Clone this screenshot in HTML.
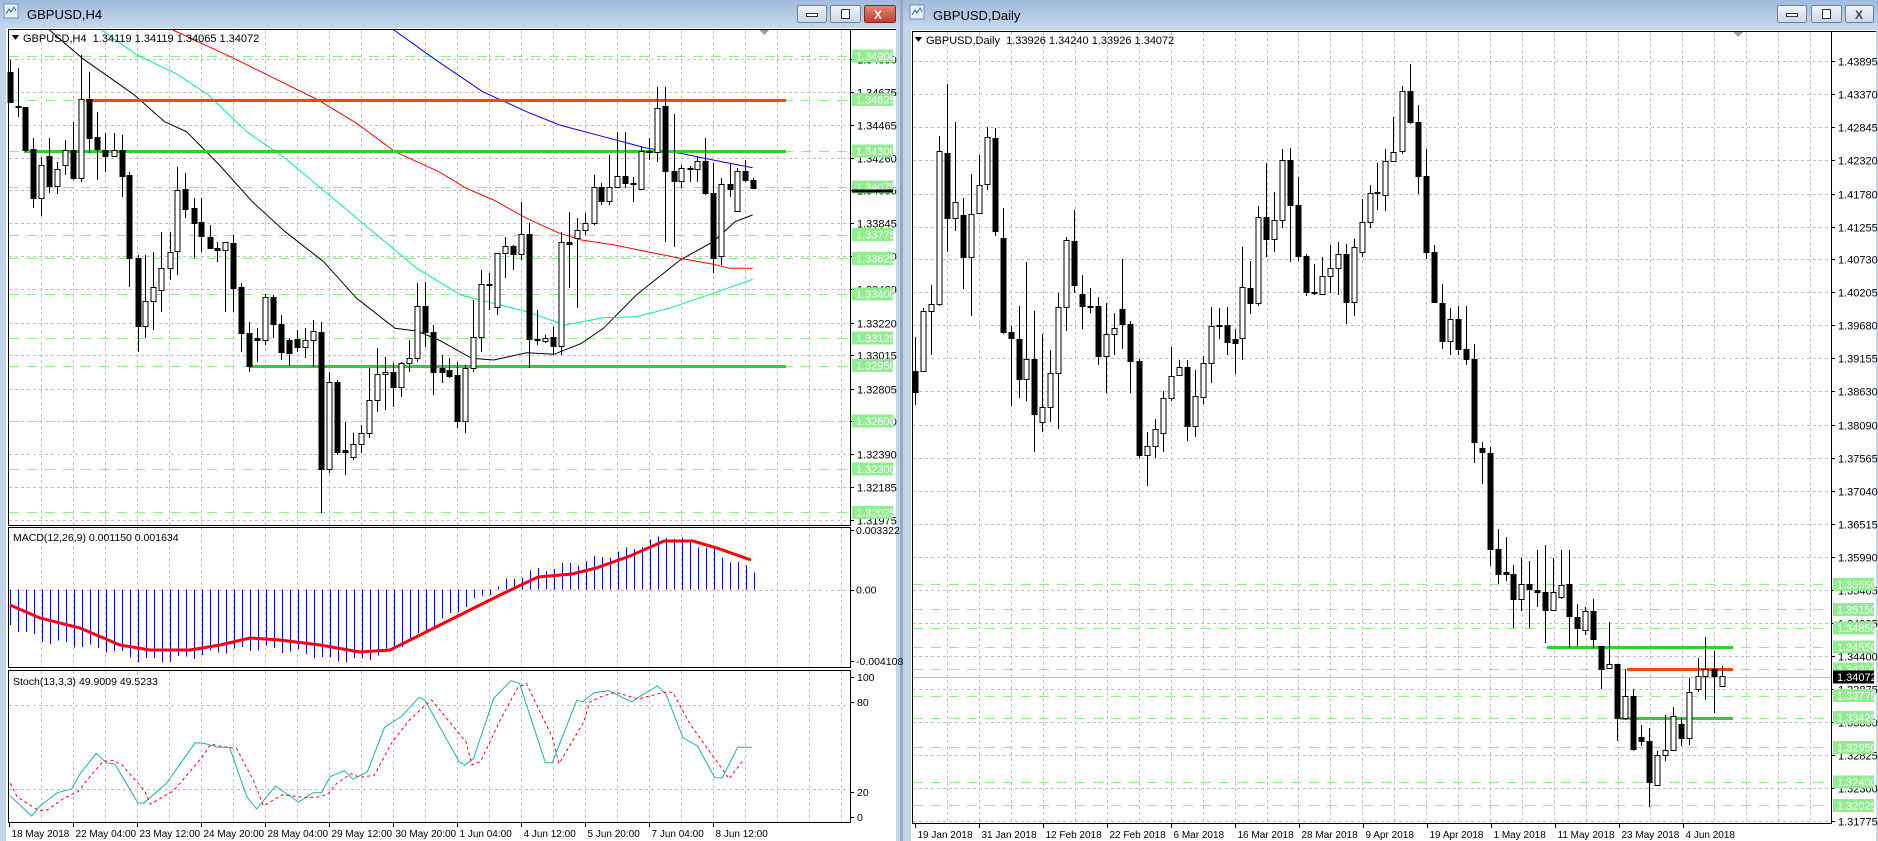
<!DOCTYPE html>
<html><head><meta charset="utf-8"><style>
html,body{margin:0;padding:0;width:1878px;height:841px;overflow:hidden;background:#b8cce4;}
svg text{font-family:"Liberation Sans",sans-serif;font-size:11px;}
svg text.d{font-size:10px;}
</style></head><body>
<svg id="s" width="1878" height="841" viewBox="0 0 1878 841" xmlns="http://www.w3.org/2000/svg" shape-rendering="crispEdges">
<defs>
<linearGradient id="tb" x1="0" y1="0" x2="0" y2="1"><stop offset="0" stop-color="#9fbadb"/><stop offset="1" stop-color="#c3d6ec"/></linearGradient>
<linearGradient id="bt" x1="0" y1="0" x2="0" y2="1"><stop offset="0" stop-color="#f4f7fb"/><stop offset="1" stop-color="#c9d6e6"/></linearGradient>
<linearGradient id="bx" x1="0" y1="0" x2="0" y2="1"><stop offset="0" stop-color="#e08a7a"/><stop offset="1" stop-color="#c23a28"/></linearGradient>
</defs>
<rect x="0" y="0" width="900" height="841" fill="#c3d6ec"/>
<rect x="0" y="0" width="900" height="26" fill="url(#tb)"/>
<rect x="4" y="4" width="14" height="14" fill="#e8f0fa" stroke="#6f8fb8"/>
<path d="M6 14 L9 9 L11 12 L14 7 L16 11" stroke="#3060b0" fill="none"/>
<text x="27" y="19" style="font-size:13px" fill="#000">GBPUSD,H4</text>
<rect x="797.5" y="5.5" width="29" height="17" rx="2" fill="url(#bt)" stroke="#6d7f99"/>
<rect x="806.5" y="13.5" width="11" height="3" fill="#fff" stroke="#333"/>
<rect x="830.5" y="5.5" width="30" height="17" rx="2" fill="url(#bt)" stroke="#6d7f99"/>
<rect x="841.5" y="9.5" width="8" height="9" fill="#fff" stroke="#333"/>
<rect x="864.5" y="5.5" width="31" height="17" rx="2" fill="url(#bx)" stroke="#7a2a20"/>
<text x="874" y="19" style="font-size:12px;font-weight:bold" fill="#fff">X</text>
<rect x="6" y="28" width="890" height="813" fill="#fff"/>
<rect x="900" y="0" width="3" height="841" fill="#9aa9bd"/>
<rect x="903" y="0" width="975" height="841" fill="#c3d6ec"/>
<rect x="903" y="0" width="975" height="27" fill="url(#tb)"/>
<rect x="910" y="5" width="14" height="14" fill="#e8f0fa" stroke="#6f8fb8"/>
<path d="M912 15 L915 10 L917 13 L920 8 L922 12" stroke="#3060b0" fill="none"/>
<text x="933" y="20" style="font-size:13px" fill="#000">GBPUSD,Daily</text>
<rect x="1777.5" y="5.5" width="29" height="17" rx="2" fill="url(#bt)" stroke="#6d7f99"/>
<rect x="1786.5" y="13.5" width="11" height="3" fill="#fff" stroke="#333"/>
<rect x="1811.5" y="5.5" width="30" height="17" rx="2" fill="url(#bt)" stroke="#6d7f99"/>
<rect x="1822.5" y="9.5" width="8" height="9" fill="#fff" stroke="#333"/>
<rect x="1845.5" y="5.5" width="28" height="17" rx="2" fill="url(#bt)" stroke="#6d7f99"/>
<text x="1855" y="19" style="font-size:12px;font-weight:bold" fill="#444">X</text>
<rect x="911" y="30" width="965" height="811" fill="#fff"/>
<g id="g"></g>
</svg>
<script>
(function(){
var s='';
function ln(x1,y1,x2,y2,c,w,d){s+='<line x1="'+x1+'" y1="'+y1+'" x2="'+x2+'" y2="'+y2+'" stroke="'+c+'" stroke-width="'+(w||1)+'"'+(d?' stroke-dasharray="'+d+'"':'')+'/>';}
function tx(x,y,t,c,extra){s+='<text x="'+x+'" y="'+y+'" fill="'+(c||'#000')+'"'+(extra||'')+'>'+t+'</text>';}
function pl(pts,c,w,d){var p=pts.map(function(a){return a[0].toFixed(1)+','+a[1].toFixed(1)}).join(' ');s+='<polyline points="'+p+'" fill="none" stroke="'+c+'" stroke-width="'+w+'"'+(d?' stroke-dasharray="'+d+'"':'')+' shape-rendering="auto"/>';}
function r(v){return Math.round(v)+0.5;}
var G='#c0c0c0',GR='#90ee90';
function yL(p){return 125+(1.34465-p)*15879;}
for(var k=1;k<=26;k++){var x=r(9.3+32*k);ln(x,30,x,525,G,1,'3,3');ln(x,528,x,667,G,1,'3,3');ln(x,671,x,822,G,1,'3,3');}
var lg=[1.34880,1.34675,1.34465,1.34260,1.34055,1.33845,1.33640,1.33430,1.33220,1.33015,1.32805,1.32600,1.32390,1.32185,1.31975];
lg.forEach(function(p){var y=r(yL(p));ln(9,y,850,y,G,1,'3,3');ln(850,y,854,y,'#000');tx(857,y+4,p.toFixed(5));});
var lgr=[1.34900,1.34625,1.34300,1.34075,1.33775,1.33625,1.33400,1.33125,1.32950,1.32600,1.32300,1.32025];
lgr.forEach(function(p){var y=r(yL(p));ln(9,y,850,y,GR,1,'10,8');});
function cz(a){return a.map(function(p){return [p[0]/1.823,p[1]/3+25];});}
pl(cz([[90,15],[150,100],[215,175],[245,210],[300,290],[340,320],[400,420],[460,530],[520,620],[590,710],[650,820],[720,910],[760,918],[800,945],[860,1000],[900,1005],[960,983],[1010,988],[1060,955],[1100,910],[1160,810],[1240,705],[1300,650],[1340,590],[1372,570]]),'#000',1);
pl(cz([[185,15],[250,90],[320,145],[380,210],[450,320],[520,400],[600,510],[680,620],[760,730],[840,810],[900,835],[960,860],[1030,900],[1100,878],[1160,875],[1220,850],[1300,805],[1372,763]]),'#00ee90',1);
pl(cz([[315,15],[420,95],[500,160],[580,225],[650,295],[720,380],[800,440],[850,490],[900,525],[960,580],[1020,625],[1060,645],[1120,660],[1180,680],[1240,700],[1300,718],[1330,730],[1372,730]]),'#ff0000',1);
pl(cz([[718,15],[790,100],[880,200],[960,260],[1020,300],[1100,335],[1180,370],[1240,385],[1300,405],[1372,428]]),'#0000ff',1);
ln(86,r(yL(1.34625)),786,r(yL(1.34625)),'#ff4500',3);
ln(24,r(yL(1.34300)),786,r(yL(1.34300)),'#32cd32',3);
ln(250,r(yL(1.32950)),786,r(yL(1.32950)),'#32cd32',3);
var LC=[[18,140,230,105,235],[32,242,246,130,275],[46,245,375,245,380],[60,372,518,340,550],[75,518,420,395,572],[90,392,482,340,505],[104,482,432,410,508],[118,420,375,345,450],[133,375,458,290,465],[148,458,222,90,470],[162,222,338,140,385],[177,336,372,262,465],[192,375,392,325,440],[207,392,375,325,395],[222,375,452,330,515],[236,450,700,440,785],[251,700,902,690,980],[265,902,828,690,940],[279,828,785,680,915],[294,795,728,620,860],[309,728,680,620,765],[323,678,495,425,750],[338,492,553,445,580],[353,550,595,520,700],[367,592,632,520,680],[382,636,668,600,670],[396,668,676,650,710],[411,676,652,650,860],[425,655,788,630,860],[440,787,925,775,980],[454,925,1022,890,1040],[469,940,945,910,1010],[484,945,815,808,960],[498,815,898,810,940],[513,898,982,870,1005],[527,945,985,940,1022],[542,942,965,915,980],[556,965,945,910,1000],[571,945,918,885,1025],[586,920,1332,890,1465],[600,1332,1072,1040,1345],[615,1072,1280,1065,1290],[629,1275,1282,1190,1350],[644,1295,1258,1225,1305],[658,1258,1225,1200,1285],[673,1225,1125,1030,1240],[688,1125,1048,968,1160],[702,1048,1042,995,1155],[717,1042,1085,1015,1145],[731,1085,1015,1010,1115],[746,1015,1000,945,1040],[761,1000,843,775,1010],[775,843,922,772,965],[790,922,1040,900,1110],[805,1030,1040,990,1075],[819,1035,1052,1000,1060],[834,1050,1188,1010,1210],[848,1188,1030,1020,1225],[863,1030,935,825,1040],[877,935,778,735,980],[892,776,779,745,855],[906,845,685,705,870],[921,685,662,635,760],[936,662,688,660,735],[950,688,628,530,705],[965,628,942,595,1030],[979,941,943,855,960],[994,948,940,930,955],[1008,935,962,905,990],[1023,962,650,620,990],[1038,650,658,560,790],[1052,640,615,580,850],[1067,615,595,565,630],[1082,595,487,450,600],[1096,487,528,475,540],[1111,528,485,390,540],[1125,485,452,320,490],[1140,452,475,320,490],[1154,474,476,455,530],[1169,492,378,365,495],[1184,377,379,340,405],[1198,380,250,185,410],[1213,243,437,185,650],[1228,437,468,268,665],[1242,468,430,420,490],[1257,430,432,422,470],[1271,432,408,395,470],[1286,408,505,340,510],[1300,505,698,415,745],[1315,693,478,460,720],[1330,478,493,415,515],[1344,558,438,430,560],[1359,438,466,405,470],[1373,466,490,460,492]];
function candles(arr,fx,fy,w){arr.forEach(function(c){var X=Math.round(fx(c[0]))+0.5,O=fy(c[1]),C=fy(c[2]),H=fy(c[3]),Lo=fy(c[4]);var t=Math.round(Math.min(O,C))+0.5,b=Math.round(Math.max(O,C))+0.5;ln(X,Math.round(H),X,Math.round(Lo),'#000');s+='<rect x="'+(X-w/2)+'" y="'+t+'" width="'+w+'" height="'+Math.max(b-t,1)+'" fill="'+(c[2]>c[1]?'#000':'#fff')+'" stroke="#000"/>';});}
candles(LC,function(x){return x/1.823;},function(y){return y/3+25;},5);
lgr.forEach(function(p){var y=yL(p);s+='<rect x="852" y="'+(y-6.5)+'" width="41" height="13" fill="#90ee90"/>';tx(856,y+4,p.toFixed(5),'#fff');});
var yc=yL(1.34072);s+='<rect x="852" y="'+(yc+2)+'" width="41" height="3" fill="#000"/>';
s+='<path d="M12 35 L19 35 L15.5 40 Z" fill="#000"/>';tx(23,42,'GBPUSD,H4&#160;&#160;1.34119 1.34119 1.34065 1.34072');
s+='<path d="M759 30 L769 30 L764 35 Z" fill="#a0a0a0"/>';
var z=589.6;ln(9,r(z),850,r(z),G,1,'3,3');
var hk=[[10,625],[40,640],[75,645],[110,650],[140,660],[172,660],[200,655],[230,650],[264,648],[300,652],[330,660],[362,660],[390,650],[420,635],[450,615],[475,600],[490,592],[505,582],[530,572],[560,566],[590,560],[620,552],[650,542],[665,535],[680,540],[700,545],[720,555],[740,565],[754,570]];
function itp(k,x){for(var i=0;i<k.length-1;i++){if(x<=k[i+1][0]){var a=k[i],b=k[i+1];return a[1]+(b[1]-a[1])*(x-a[0])/(b[0]-a[0]);}}return k[k.length-1][1];}
for(var i=0;i<94;i++){var x=10+8*i;var v=itp(hk,x)+Math.sin(i*1.7)*3;ln(Math.round(x)+0.5,z,Math.round(x)+0.5,v,'#0000ff',1);}
pl([[10,605],[40,618],[80,628],[120,645],[150,650],[190,650],[220,645],[250,638],[280,640],[320,645],[360,652],[390,650],[420,635],[460,615],[500,595],[538,577],[572,574],[596,568],[630,556],[664,541],[693,541],[717,548],[751,560]],'#ff0000',3);
tx(13,541,'MACD(12,26,9) 0.001150 0.001634','#000',' style="font-size:10.5px"');
[[530,'0.003322'],[589.6,'0.00'],[661,'-0.004108']].forEach(function(a){ln(850,r(a[0]),854,r(a[0]),'#000');tx(856,a[0]+4,a[1],'#000',' style="font-size:10.5px"');});
function sy(v){return 817-v*1.4;}
ln(9,r(sy(80)),850,r(sy(80)),G,1,'3,3');ln(9,r(sy(20)),850,r(sy(20)),G,1,'3,3');
[[677,'100'],[702,'80'],[792,'20'],[817,'0']].forEach(function(a){ln(850,r(a[0]),854,r(a[0]),'#000');tx(857,a[0]+4,a[1],'#000',' style="font-size:10.5px"');});
var st=[[18,468],[55,528],[70,497],[100,458],[125,447],[140,400],[168,340],[185,368],[200,372],[240,488],[250,490],[290,430],[340,308],[355,310],[380,322],[400,322],[430,470],[447,507],[480,438],[520,486],[545,458],[560,458],[575,410],[600,392],[615,418],[640,395],[670,262],[700,228],[730,172],[740,180],[800,365],[810,375],[825,355],[860,175],[890,122],[905,130],[950,368],[962,368],[1005,180],[1015,185],[1035,158],[1060,152],[1100,185],[1145,138],[1160,162],[1190,293],[1215,318],[1245,413],[1258,414],[1285,322],[1310,322]];
pl(st.map(function(p){return [p[0]/1.742,640+p[1]/3];}),'#20b2aa',1);
var sg=[[18,430]];for(var i=0;i<st.length;i++){var a=st[Math.max(0,i-1)],b=st[i];sg.push([b[0]+12,(a[1]+b[1]*2)/3+3]);}
pl(sg.filter(function(p){return p[0]<=1312;}).map(function(p){return [p[0]/1.742,640+p[1]/3];}),'#ff0000',1,'3,3');
tx(13,685,'Stoch(13,3,3) 49.9009 49.5233','#000',' style="font-size:10.5px"');
s+='<rect x="8.5" y="29.5" width="842" height="496" fill="none" stroke="#000"/>';
s+='<rect x="8.5" y="527.5" width="842" height="140" fill="none" stroke="#000"/>';
s+='<rect x="8.5" y="670.5" width="842" height="152" fill="none" stroke="#000"/>';
ln(8,29.5,896,29.5,'#000');
var ld=['18 May 2018','22 May 04:00','23 May 12:00','24 May 20:00','28 May 04:00','29 May 12:00','30 May 20:00','1 Jun 04:00','4 Jun 12:00','5 Jun 20:00','7 Jun 04:00','8 Jun 12:00'];
ld.forEach(function(t,i){var x=r(9.3+64*i);ln(x,823,x,827,'#000');tx(x+2,837,t,'#000',' class="d"');});
function yR(p){return 821-(p-1.31775)*6271;}
for(var x=947;x<1831;x+=31.95){var X=r(x);ln(X,32,X,823,G,1,'3,3');}
var rg=[1.43895,1.43370,1.42845,1.42320,1.41780,1.41255,1.40730,1.40205,1.39680,1.39155,1.38630,1.38090,1.37565,1.37040,1.36515,1.35990,1.35465,1.34935,1.34400,1.33875,1.33350,1.32825,1.32300,1.31775];
rg.forEach(function(p){var y=r(yR(p));if(y<822)ln(913,y,1831,y,G,1,'3,3');ln(1831,y,1835,y,'#000');tx(1838,y+4,p.toFixed(5));});
var rgr=[1.35550,1.35150,1.34850,1.34550,1.34200,1.33775,1.33425,1.32950,1.32400,1.32025];
rgr.forEach(function(p){var y=r(yR(p));ln(913,y,1831,y,GR,1,'10,8');});
var yc2=r(yR(1.34072));ln(913,yc2,1831,yc2,'#c0c0c0',1);
ln(1547,r(yR(1.34550)),1733,r(yR(1.34550)),'#32cd32',3);
ln(1620,r(yR(1.33425)),1733,r(yR(1.33425)),'#32cd32',3);
ln(1627,r(yR(1.34200)),1733,r(yR(1.34200)),'#ff4500',3);
var RC=[[10,672,712,605,738],[25,672,556,550,672],[40,556,542,505,640],[55,542,245,215,545],[70,248,375,115,440],[85,375,344,188,400],[100,368,450,335,512],[115,450,367,290,565],[130,365,311,253,360],[145,308,218,198,320],[160,220,400,200,410],[175,414,597,355,600],[190,597,608,585,740],[205,610,687,545,725],[220,687,648,460,730],[235,648,756,555,830],[250,770,742,600,790],[265,742,675,632,770],[280,675,548,520,785],[295,548,418,412,595],[310,420,505,360,520],[325,522,546,485,590],[340,546,548,510,560],[355,546,642,528,660],[370,642,600,540,715],[385,600,588,560,640],[400,552,580,455,630],[415,580,653,575,715],[432,653,835,648,840],[448,835,818,790,895],[463,818,785,765,840],[478,792,725,710,830],[493,725,681,625,730],[508,680,665,650,680],[523,665,778,650,808],[538,778,720,670,800],[553,722,657,642,735],[568,657,585,548,695],[583,585,583,550,610],[598,583,615,548,640],[613,610,617,590,678],[628,608,508,432,650],[643,510,540,458,562],[658,540,372,352,545],[673,372,415,268,450],[688,415,378,325,440],[703,378,262,240,395],[718,262,350,238,460],[733,350,448,295,458],[748,448,518,445,527],[763,518,520,465,525],[778,522,488,450,525],[793,488,472,428,520],[808,472,445,422,525],[823,445,538,425,580],[838,538,432,415,565],[853,440,382,338,450],[868,382,326,310,395],[883,326,325,268,360],[898,330,265,240,362],[913,265,246,178,258],[930,245,128,118,250],[945,128,188,75,192],[960,188,293,155,328],[975,293,440,240,455],[990,440,538,428,540],[1005,540,613,503,630],[1020,613,570,550,640],[1036,570,630,545,640],[1050,630,648,545,660],[1065,648,810,620,850],[1080,822,830,810,892],[1095,832,1018,820,1050],[1110,1018,1066,978,1085],[1125,1063,1066,995,1080],[1140,1066,1115,1048,1170],[1155,1115,1085,1035,1138],[1170,1085,1095,1040,1170],[1185,1097,1100,1020,1130],[1200,1100,1135,1010,1200],[1215,1135,1100,1035,1135],[1230,1110,1088,1020,1115],[1245,1085,1148,1020,1210],[1260,1150,1170,1125,1205],[1275,1175,1138,1130,1185],[1290,1137,1192,1115,1210],[1305,1205,1250,1205,1290],[1320,1248,1240,1160,1250],[1335,1240,1345,1245,1390],[1350,1345,1302,1250,1350],[1365,1302,1405,1290,1410],[1380,1382,1390,1360,1400],[1396,1390,1470,1365,1518],[1412,1475,1418,1410,1478],[1427,1418,1407,1340,1430],[1442,1407,1342,1325,1410],[1457,1358,1385,1345,1400],[1472,1385,1295,1268,1398],[1488,1290,1265,1230,1295],[1502,1265,1250,1188,1310],[1518,1250,1265,1215,1335],[1534,1283,1265,1245,1285]];
RC.forEach(function(c){if(c[3]>Math.min(c[1],c[2]))c[3]=Math.min(c[1],c[2]);if(c[4]<Math.max(c[1],c[2]))c[4]=Math.max(c[1],c[2]);});
candles(RC,function(x){return 910+x/1.889;},function(y){return 25+y*0.515;},5);
rgr.forEach(function(p){var y=yR(p);s+='<rect x="1833" y="'+(y-6.5)+'" width="41" height="13" fill="#90ee90"/>';tx(1837,y+4,p.toFixed(5),'#fff');});
s+='<rect x="1833" y="'+(yR(1.34072)-6.5)+'" width="41" height="13" fill="#000"/>';tx(1837,yR(1.34072)+4,'1.34072','#fff');
s+='<rect x="912.5" y="31.5" width="919" height="792" fill="none" stroke="#000"/>';
ln(912,31.5,1876,31.5,'#000');
s+='<path d="M915 37 L922 37 L918.5 42 Z" fill="#000"/>';tx(926,44,'GBPUSD,Daily&#160;&#160;1.33926 1.34240 1.33926 1.34072');
s+='<path d="M1733 32 L1743 32 L1738 37 Z" fill="#a0a0a0"/>';
var rd=['19 Jan 2018','31 Jan 2018','12 Feb 2018','22 Feb 2018','6 Mar 2018','16 Mar 2018','28 Mar 2018','9 Apr 2018','19 Apr 2018','1 May 2018','11 May 2018','23 May 2018','4 Jun 2018'];
rd.forEach(function(t,i){var x=r(915.3+64*i);ln(x,824,x,828,'#000');tx(x+2,838,t,'#000',' class="d"');});
document.getElementById('g').innerHTML=s;
})();
</script>
</body></html>
